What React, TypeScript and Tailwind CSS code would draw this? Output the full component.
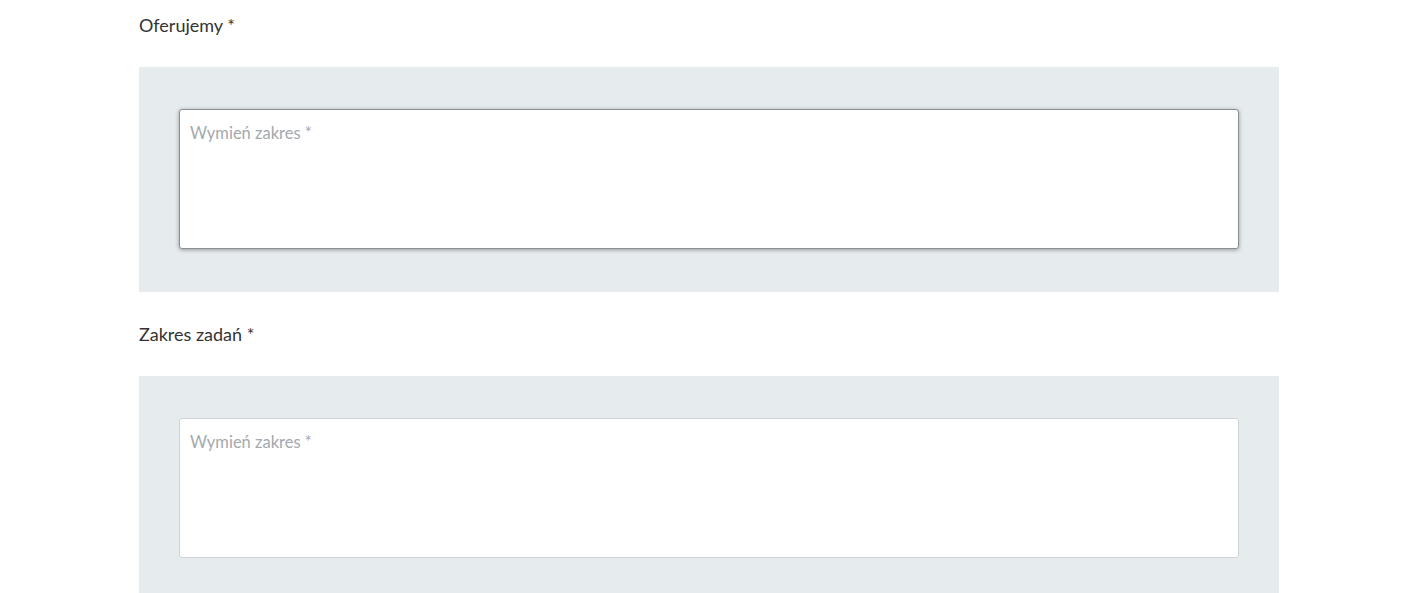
export default function App() {
  const sections = [
    { label: 'Oferujemy *', focused: true },
    { label: 'Zakres zadań *', focused: false },
  ]

  return (
    <div className="min-h-screen bg-white" style={{ fontFamily: "Lato, 'Open Sans', sans-serif" }}>
      <div className="ml-[139px] w-[1140px] pt-[13px]">
        {sections.map((s) => (
          <div key={s.label} className="mb-[30px]">
            <label className="mb-[30px] block text-[18px] leading-6 text-[#333]">{s.label}</label>
            <div className="bg-[#e6ebee] px-10 pt-[42px] pb-[43px]">
              <textarea
                autoFocus={s.focused}
                placeholder="Wymień zakres *"
                className={`block h-[140px] w-full resize-none rounded-[3px] bg-white px-[10px] pt-[11px] pb-3 text-[16.5px] leading-6 text-[#333] outline-none placeholder:text-[#a3a9ae] ${
                  s.focused
                    ? 'border border-[#8a9096] shadow-[0_1px_4px_rgba(0,0,0,0.35)]'
                    : 'border border-[#cfd4d8]'
                }`}
              />
            </div>
          </div>
        ))}
      </div>
    </div>
  )
}
